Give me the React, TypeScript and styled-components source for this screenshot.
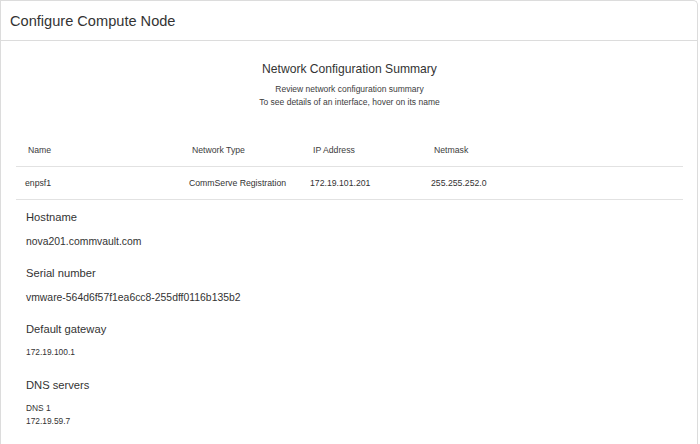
import React, { FC } from 'react';
import styled, { createGlobalStyle } from 'styled-components';

const GlobalStyle = createGlobalStyle`
    html, body {
        margin: 0;
        padding: 0;
        background: #ffffff;
        font-family: 'Liberation Sans', Arial, sans-serif;
        color: #333333;
    }
`;

type Iface = {
    name: string;
    type: string;
    ip: string;
    netmask: string;
};

const interfaces: Array<Iface> = [
    { name: 'enpsf1', type: 'CommServe Registration', ip: '172.19.101.201', netmask: '255.255.252.0' },
];

const App: FC = () => {
    return (
        <>
            <GlobalStyle />
            <Page>
                <Card>
                    <Header>
                        <H1>Configure Compute Node</H1>
                    </Header>
                    <Body>
                        <Summary>
                            <H2>Network Configuration Summary</H2>
                            <Sub>Review network configuration summary</Sub>
                            <Sub>To see details of an interface, hover on its name</Sub>
                        </Summary>
                        <Table>
                            <HeadRow>
                                <Th>Name</Th>
                                <Th>Network Type</Th>
                                <Th>IP Address</Th>
                                <Th>Netmask</Th>
                            </HeadRow>
                            {interfaces.map(i => (
                                <Row key={i.name}>
                                    <Td>{i.name}</Td>
                                    <Td>{i.type}</Td>
                                    <Td>{i.ip}</Td>
                                    <Td>{i.netmask}</Td>
                                </Row>
                            ))}
                        </Table>
                        <Section>
                            <Label>Hostname</Label>
                            <Value big>nova201.commvault.com</Value>
                        </Section>
                        <Section>
                            <Label>Serial number</Label>
                            <Value big>vmware-564d6f57f1ea6cc8-255dff0116b135b2</Value>
                        </Section>
                        <Section>
                            <Label>Default gateway</Label>
                            <Value>172.19.100.1</Value>
                        </Section>
                        <Section>
                            <Label>DNS servers</Label>
                            <Value>DNS 1</Value>
                            <SmallLine>172.19.59.7</SmallLine>
                        </Section>
                    </Body>
                </Card>
            </Page>
        </>
    );
};

const Page = styled.div`
    width: 698px;
`;

const Card = styled.div`
    border: 1px solid #dcdcdc;
    border-bottom: none;
    border-radius: 0 5px 0 0;
    min-height: 460px;
    background: #fff;
`;

const Header = styled.div`
    height: 39px;
    border-bottom: 1px solid #dcdcdc;
    display: flex;
    align-items: center;
    padding-left: 9px;
`;

const H1 = styled.h1`
    margin: 0;
    font-size: 14.6px;
    font-weight: normal;
    color: #333;
`;

const Body = styled.div`
    padding: 19px 14px 0 15px;
`;

const Summary = styled.div`
    text-align: center;
`;

const H2 = styled.h2`
    margin: 0 0 4px 0;
    font-size: 12.1px;
    line-height: 19px;
    font-weight: normal;
    color: #333;
`;

const Sub = styled.p`
    margin: 0;
    font-size: 8.5px;
    line-height: 13px;
    color: #3c3c3c;
`;

const Table = styled.div`
    margin-top: 25px;
`;

const HeadRow = styled.div`
    display: grid;
    grid-template-columns: 164px 121px 121px 1fr;
    height: 32px;
    align-items: center;
    border-bottom: 1px solid #e2e2e2;
    padding-left: 12px;
`;

const Row = styled(HeadRow)`
    padding-left: 9px;
`;

const Th = styled.div`
    font-size: 8.7px;
    color: #3c3c3c;
`;

const Td = styled.div`
    font-size: 8.7px;
    color: #333;
`;

const Section = styled.div`
    min-height: 56px;
    padding: 7px 0 0 10px;
    box-sizing: border-box;
`;

const Label = styled.div`
    font-size: 11.2px;
    line-height: 20px;
    color: #333;
`;

const Value = styled.div<{ big?: boolean }>`
    margin-top: 7px;
    font-size: ${p => (p.big ? '10.4px' : '8.4px')};
    line-height: ${p => (p.big ? '16px' : '13px')};
    color: #333;
`;

const SmallLine = styled.div`
    font-size: 8.4px;
    line-height: 13px;
    color: #333;
`;

export default App;
